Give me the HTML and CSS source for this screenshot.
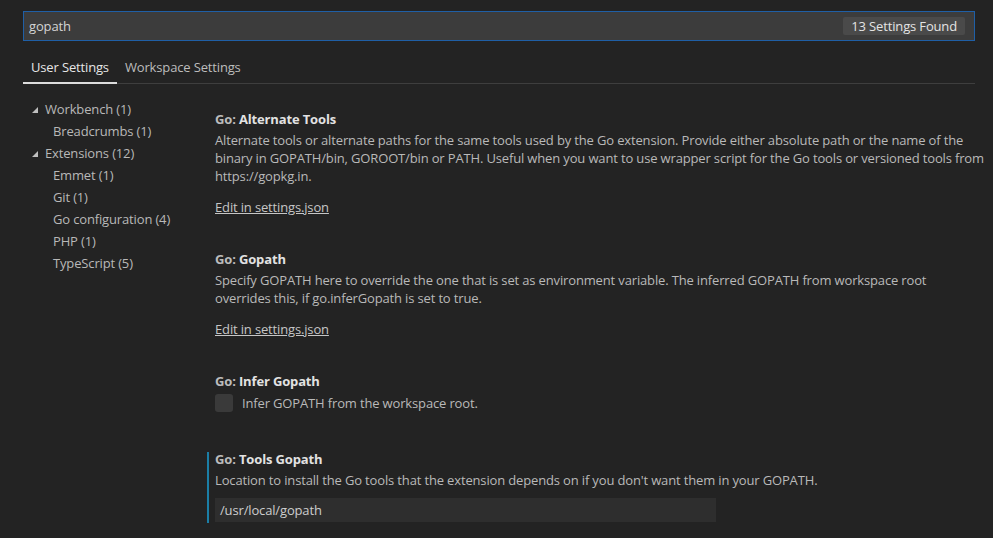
FILE: index.html
```html
<!DOCTYPE html>
<html>
<head>
<meta charset="utf-8">
<link rel="stylesheet" href="styles.css">
</head>
<body>
<div class="search">
  <span class="query">gopath</span>
  <span class="badge">13 Settings Found</span>
</div>
<div class="tabs">
  <div class="tab active">User Settings</div>
  <div class="tab">Workspace Settings</div>
</div>
<div class="main">
  <div class="tree">
    <div class="row group"><span class="twisty"></span>Workbench (1)</div>
    <div class="row child">Breadcrumbs (1)</div>
    <div class="row group"><span class="twisty"></span>Extensions (12)</div>
    <div class="row child">Emmet (1)</div>
    <div class="row child">Git (1)</div>
    <div class="row child">Go configuration (4)</div>
    <div class="row child">PHP (1)</div>
    <div class="row child">TypeScript (5)</div>
  </div>
  <div class="settings">
    <div class="setting">
      <div class="title"><span class="cat">Go: </span><span class="name">Alternate Tools</span></div>
      <div class="desc">Alternate tools or alternate paths for the same tools used by the Go extension. Provide either absolute path or the name of the binary in GOPATH/bin, GOROOT/bin or PATH. Useful when you want to use wrapper script for the Go tools or versioned tools from https://gopkg.in.</div>
      <a class="edit">Edit in settings.json</a>
    </div>
    <div class="setting">
      <div class="title"><span class="cat">Go: </span><span class="name">Gopath</span></div>
      <div class="desc">Specify GOPATH here to override the one that is set as environment variable. The inferred GOPATH from workspace root<br>overrides this, if go.inferGopath is set to true.</div>
      <a class="edit">Edit in settings.json</a>
    </div>
    <div class="setting bool">
      <div class="title"><span class="cat">Go: </span><span class="name">Infer Gopath</span></div>
      <div class="check-row"><span class="checkbox"></span><span class="check-label">Infer GOPATH from the workspace root.</span></div>
    </div>
    <div class="setting focused">
      <div class="title"><span class="cat">Go: </span><span class="name">Tools Gopath</span></div>
      <div class="desc">Location to install the Go tools that the extension depends on if you don't want them in your GOPATH.</div>
      <div class="text-input">/usr/local/gopath</div>
    </div>
  </div>
</div>
</body>
</html>
```
FILE: styles.css
```css
* { box-sizing: border-box; }
html, body { margin: 0; height: 100%; }
body {
  background: #232323;
  color: #bbbbbb;
  font-family: "Open Sans", "Noto Sans", sans-serif;
  font-size: 13px;
  letter-spacing: -0.15px;
  padding: 11px 18px 0 23px;
  overflow: hidden;
}
.search {
  height: 30px;
  background: #3c3c3c;
  border: 1px solid #1f5fa6;
  display: flex;
  align-items: center;
  justify-content: space-between;
  padding: 0 9px 0 5px;
}
.query { color: #d4d4d4; font-size: 13px; }
.badge {
  background: #4a4a4a;
  color: #e4e4e4;
  height: 18px;
  line-height: 18px;
  padding: 0 8px;
  border-radius: 2px;
}
.tabs {
  display: flex;
  margin-top: 11px;
  border-bottom: 1px solid #3e3e3e;
}
.tab {
  padding: 0 8px;
  height: 32px;
  line-height: 30px;
  color: #bdbdbd;
  margin-bottom: -1px;
  border-bottom: 2px solid transparent;
}
.tab.active { color: #e6e6e6; border-bottom-color: #dcdcdc; }
.main { display: flex; }
.tree {
  width: 184px;
  flex: none;
  padding: 14px 0 0 9px;
}
.row {
  height: 22px;
  line-height: 22px;
  color: #b8b8b8;
  display: flex;
  align-items: center;
  white-space: nowrap;
}
.twisty {
  width: 0; height: 0;
  border-left: 6px solid transparent;
  border-bottom: 6px solid #bfbfbf;
  margin-right: 7px;
  margin-top: 1px;
}
.child { padding-left: 21px; }
.settings {
  flex: 1;
  padding-top: 28px;
  margin-right: -14px;
}
.setting {
  border-left: 2px solid transparent;
  padding: 0 0 1px 6px;
  margin-bottom: 35px;
}
.setting.bool { margin-bottom: 39px; }
.setting.focused { border-left-color: #1b7ea6; }
.title { line-height: 14px; font-weight: 700; }
.cat { color: #bcbcbc; }
.name { color: #e2e2e2; }
.desc { margin-top: 5px; line-height: 18px; color: #b9b9b9; }
.edit {
  display: block;
  margin-top: 13px;
  line-height: 18px;
  color: #c6c6c6;
  text-decoration: underline;
  width: max-content;
}
.check-row { display: flex; align-items: center; margin-top: 6px; height: 18px; }
.checkbox {
  width: 18px; height: 18px;
  background: #3a3a3a;
  border-radius: 3px;
  margin-right: 9px;
}
.check-label { color: #b9b9b9; }
.text-input {
  margin-top: 9px;
  width: 501px;
  height: 24px;
  line-height: 24px;
  background: #2e2e2e;
  color: #cdcdcd;
  padding-left: 5px;
}
```
